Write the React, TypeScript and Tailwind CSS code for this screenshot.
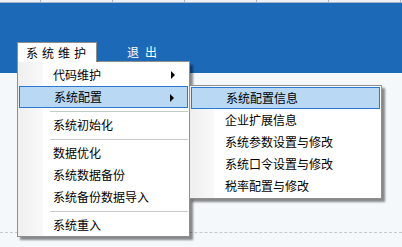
import React from "react";

const font = { fontFamily: '"Noto Sans CJK SC", "Noto Sans", sans-serif' };

function Arrow() {
  return (
    <svg width="5" height="8" viewBox="0 0 5 8" className="absolute right-[12px] top-[7px]">
      <polygon points="0,0 4,4 0,8" fill="#000" />
    </svg>
  );
}

function Item({ label, arrow, active }: { label: string; arrow?: boolean; active?: boolean }) {
  return (
    <div
      className={
        "relative h-[22px] flex items-center pl-[34px] text-[12px] leading-none text-black " +
        (active ? "border border-[#2a79cf] bg-[#b8d8f4] pl-[33px]" : "")
      }
    >
      {label}
      {arrow && <Arrow />}
    </div>
  );
}

function Sep() {
  return (
    <div className="h-[6px] flex items-center pl-[31px]">
      <div className="h-px w-full bg-[#c8c8c8]" />
    </div>
  );
}

export default function App() {
  const lines = [40, 112, 184, 256, 328, 400];
  return (
    <div className="relative w-[402px] h-[247px] overflow-hidden bg-[#f4f8fb]" style={font}>
      <div className="relative h-[3px] bg-[#eef1f6] border-b border-[#a9b3c7]">
        {lines.map((x) => (
          <div key={x} className="absolute top-0 h-[2px] w-px bg-[#a9b3c7]" style={{ left: x }} />
        ))}
      </div>
      <div className="h-[70px] bg-[#1c69b8] flex items-start pl-[17px] pt-[39px]">
        <div className="h-[21px] w-[80px] bg-white border-t border-l border-r border-[#8f8f8f] flex items-center pl-[8px] text-[12px] tracking-[4px] text-black leading-none">
          系统维护
        </div>
        <div className="ml-[30px] mt-[4px] text-[12px] tracking-[6px] text-white leading-none">退出</div>
      </div>
      <div className="absolute left-0 right-0 top-[232px] border-t border-dashed border-[#c4c8cc]" />

      {/* main dropdown */}
      <div className="absolute left-[17px] top-[62px] w-[173px] h-[175px] bg-white border-l border-b border-r border-[#8f8f8f] shadow-[3px_3px_2px_rgba(0,0,0,0.45)]">
        <div className="absolute left-[80px] right-[-1px] top-[-1px] h-px bg-[#8f8f8f]" />
        <div className="absolute left-0 top-0 bottom-0 w-[25px] bg-gradient-to-r from-[#efefef] to-[#f9f9f9]" />
        <div className="relative pt-[2px] px-[1px]">
          <Item label="代码维护" arrow />
          <Item label="系统配置" arrow active />
          <Sep />
          <Item label="系统初始化" />
          <Sep />
          <Item label="数据优化" />
          <Item label="系统数据备份" />
          <Item label="系统备份数据导入" />
          <Sep />
          <Item label="系统重入" />
        </div>
      </div>

      {/* submenu */}
      <div className="absolute left-[189px] top-[85px] w-[193px] h-[114px] bg-white border border-[#8f8f8f] shadow-[3px_3px_2px_rgba(0,0,0,0.45)]">
        <div className="absolute left-0 top-0 bottom-0 w-[24px] bg-gradient-to-r from-[#efefef] to-[#f9f9f9]" />
        <div className="relative pt-[1px] px-[1px]">
          <Item label="系统配置信息" active />
          <Item label="企业扩展信息" />
          <Item label="系统参数设置与修改" />
          <Item label="系统口令设置与修改" />
          <Item label="税率配置与修改" />
        </div>
      </div>
    </div>
  );
}
